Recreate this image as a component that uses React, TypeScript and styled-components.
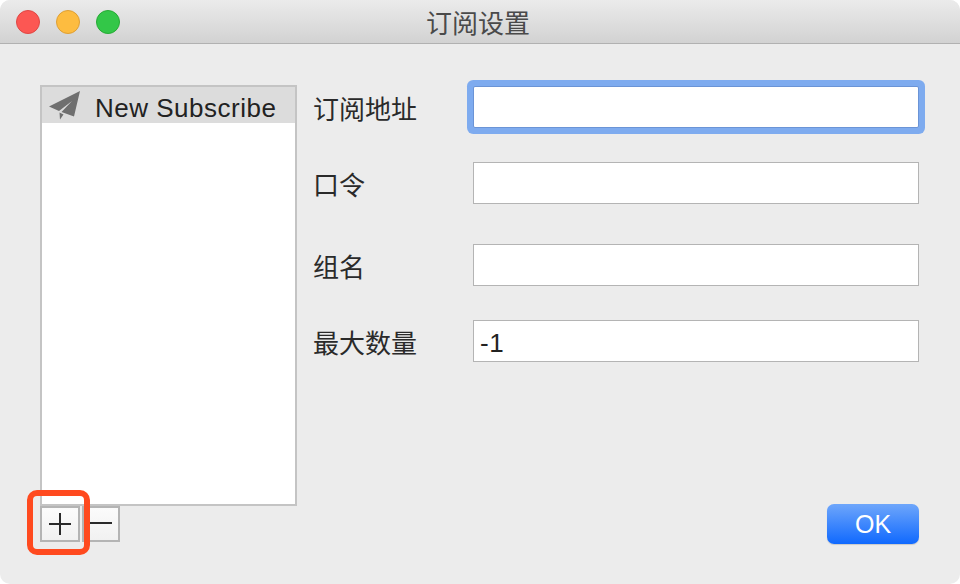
import styled, { createGlobalStyle } from "styled-components";

const fieldRows = [
  { label: "订阅地址", value: "", focused: true, top: 1 },
  { label: "口令", value: "", focused: false, top: 34 },
  { label: "组名", value: "", focused: false, top: 40 },
  { label: "最大数量", value: "-1", focused: false, top: 34 },
];

const App = () => {
  return (
    <>
      <GlobalStyle />
      <SWindow>
        <STitleBar>
          <STraffic>
            <SLight $bg="#fc5753" $line="#df4744" />
            <SLight $bg="#fdbc40" $line="#de9f34" />
            <SLight $bg="#33c748" $line="#27aa35" />
          </STraffic>
          <STitle>订阅设置</STitle>
        </STitleBar>
        <SBody>
          <SLeft>
            <SList>
              <SListRow>
                <SPlane viewBox="0 0 32 30">
                  <path d="M31 0 L0 15.5 L10 20 L23 10 L12.5 21 L25 25.5 Z" />
                  <path d="M10.5 21.5 L14.5 23.5 L11 28.5 Z" />
                </SPlane>
                <SRowText>New Subscribe</SRowText>
              </SListRow>
            </SList>
            <SToolRow>
              <SToolButton $wide>
                <svg width="22" height="22" viewBox="0 0 22 22">
                  <path d="M0 11 H22 M11 0 V22" stroke="#2a2a2a" strokeWidth="2" fill="none" />
                </svg>
              </SToolButton>
              <SToolButton>
                <svg width="22" height="22" viewBox="0 0 22 22">
                  <path d="M0 10 H22" stroke="#2a2a2a" strokeWidth="2" fill="none" />
                </svg>
              </SToolButton>
              <SHighlight />
            </SToolRow>
          </SLeft>
          <SRight>
            {fieldRows.map((row) => (
              <SFieldRow key={row.label} $top={row.top}>
                <SLabel>{row.label}</SLabel>
                <SInput $focused={row.focused} defaultValue={row.value} />
              </SFieldRow>
            ))}
            <SOkButton>OK</SOkButton>
          </SRight>
        </SBody>
      </SWindow>
    </>
  );
};

const GlobalStyle = createGlobalStyle`
  html, body {
    margin: 0;
    padding: 0;
    background: #fff;
  }
`;

const SWindow = styled.div`
  width: 960px;
  height: 584px;
  display: flex;
  flex-direction: column;
  overflow: hidden;
  border-radius: 10px;
  background: #ececec;
  font-family: "Liberation Sans", "Noto Sans CJK SC", sans-serif;
  color: #222;
`;

const STitleBar = styled.div`
  flex: none;
  height: 43px;
  position: relative;
  display: flex;
  align-items: center;
  justify-content: center;
  background: linear-gradient(#ebebeb, #d2d2d2);
  border-bottom: 1px solid #b1b1b1;
`;

const STraffic = styled.div`
  position: absolute;
  left: 16px;
  top: 10px;
  display: flex;
  gap: 16px;
`;

const SLight = styled.span<{ $bg: string; $line: string }>`
  width: 24px;
  height: 24px;
  box-sizing: border-box;
  border-radius: 50%;
  background: ${(p) => p.$bg};
  border: 1px solid ${(p) => p.$line};
`;

const STitle = styled.div`
  padding-right: 4px;
  font-size: 26px;
  color: #4a4a4a;
`;

const SBody = styled.div`
  flex: 1;
  display: flex;
  padding: 41px 41px 40px 40px;
`;

const SLeft = styled.div`
  flex: none;
  width: 257px;
  display: flex;
  flex-direction: column;
`;

const SList = styled.div`
  box-sizing: border-box;
  height: 421px;
  background: #fff;
  border: 2px solid #c4c4c4;
`;

const SListRow = styled.div`
  height: 36px;
  display: flex;
  align-items: center;
  gap: 14px;
  padding-left: 7px;
  background: #dcdcdc;
`;

const SPlane = styled.svg`
  flex: none;
  width: 32px;
  height: 30px;
  margin-top: 2px;
  fill: #6f6f6f;
`;

const SRowText = styled.span`
  margin-top: 6px;
  font-size: 26px;
  letter-spacing: 0.5px;
  color: #222;
`;

const SToolRow = styled.div`
  position: relative;
  display: flex;
  gap: 2px;
`;

const SToolButton = styled.button<{ $wide?: boolean }>`
  box-sizing: border-box;
  width: ${(p) => (p.$wide ? "40px" : "38px")};
  height: 36px;
  padding: 0;
  display: flex;
  align-items: center;
  justify-content: center;
  background: linear-gradient(#fbfbfb, #f1f1f1);
  border: 2px solid #b4b4b4;
`;

const SHighlight = styled.div`
  position: absolute;
  left: -13px;
  top: -16px;
  width: 63px;
  height: 65px;
  box-sizing: border-box;
  border: 6px solid #ff4a1f;
  border-radius: 10px;
  pointer-events: none;
`;

const SRight = styled.div`
  flex: 1;
  margin-left: 16px;
  display: flex;
  flex-direction: column;
`;

const SFieldRow = styled.div<{ $top: number }>`
  display: flex;
  align-items: center;
  margin-top: ${(p) => p.$top}px;
`;

const SLabel = styled.label`
  flex: none;
  width: 160px;
  font-size: 26px;
  color: #2a2a2a;
`;

const SInput = styled.input<{ $focused: boolean }>`
  flex: 1;
  min-width: 0;
  box-sizing: border-box;
  height: 42px;
  padding: 4px 6px 0;
  font-family: "Liberation Sans", sans-serif;
  font-size: 26px;
  letter-spacing: 0.5px;
  color: #222;
  background: #fff;
  outline: none;
  border: 1px solid ${(p) => (p.$focused ? "#6b94d6" : "#b4b4b4")};
  border-radius: ${(p) => (p.$focused ? "2px" : "0")};
  box-shadow: ${(p) => (p.$focused ? "0 0 0 6px #7eabef" : "none")};
`;

const SOkButton = styled.button`
  margin-top: auto;
  align-self: flex-end;
  width: 92px;
  height: 40px;
  padding: 0;
  border: none;
  border-radius: 7px;
  background: linear-gradient(#6ea6fb, #1069fe);
  box-shadow: 0 1px 1px rgba(0, 0, 0, 0.15);
  color: #fff;
  font-family: "Liberation Sans", sans-serif;
  font-size: 25px;
`;

export default App;
